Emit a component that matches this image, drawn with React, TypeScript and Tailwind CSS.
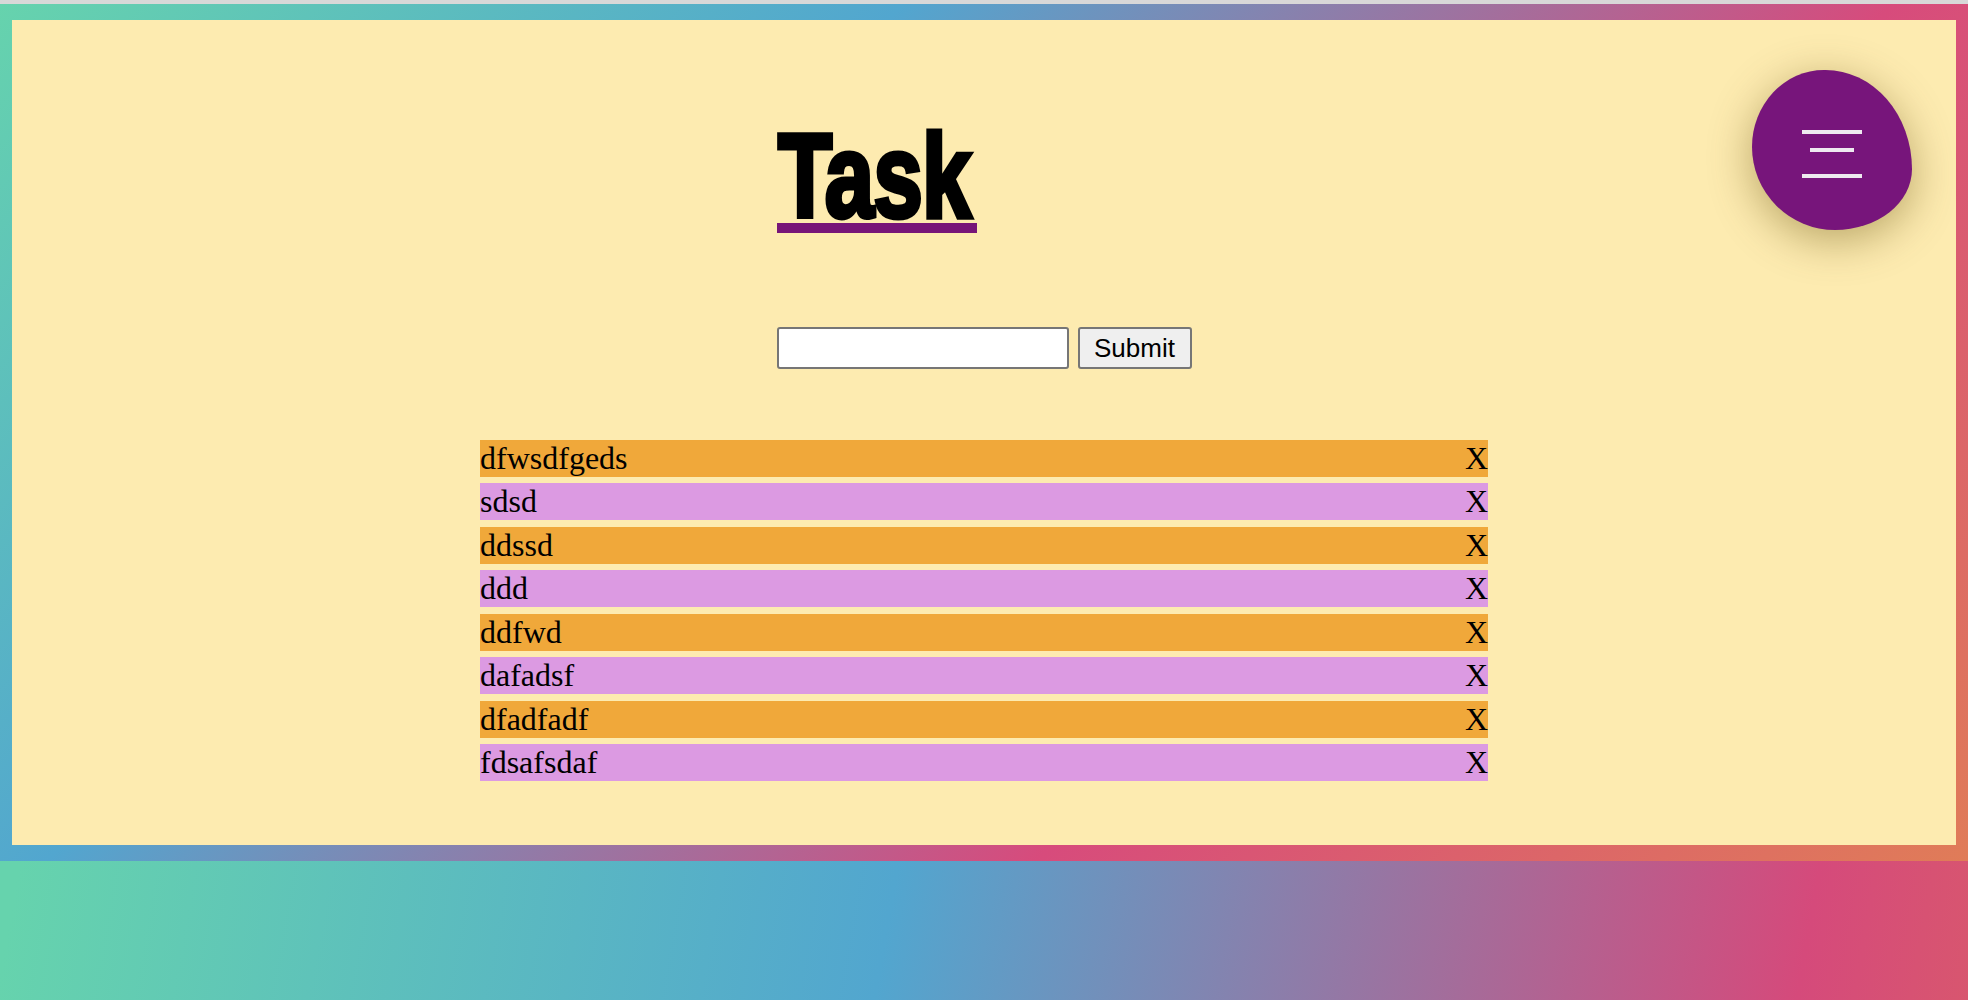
import React from "react";

const tasks = [
  "dfwsdfgeds",
  "sdsd",
  "ddssd",
  "ddd",
  "ddfwd",
  "dafadsf",
  "dfadfadf",
  "fdsafsdaf",
];

export default function App() {
  return (
    <div className="relative w-[1968px] h-[1000px] overflow-hidden bg-[linear-gradient(100deg,#66d3ad_8%,#52a6cf_49%,#d54a7b_92%,#d8566f_100%)]">
      <div className="h-[4px] bg-[#d8d8d8]" />
      <div className="pt-[16px] pb-[16px] px-[12px] bg-[linear-gradient(135deg,#66d3ad_0%,#52a6cf_32%,#d74b7c_67%,#e07c58_100%)]">
        <div className="relative h-[825px] bg-[#fdebb0]">
          <div className="w-[415px] mx-auto pt-[108.5px]">
            <h1 className="w-[200px] h-[104.5px] border-b-[10px] border-[#771578] leading-[94.5px] text-[119px] font-bold text-black whitespace-nowrap font-['Liberation_Sans',Arial,sans-serif]">
              <span className="inline-block origin-left translate-x-[1px] scale-x-[0.745] [-webkit-text-stroke:5px_black] tracking-[-1px]">
                Task
              </span>
            </h1>
            <form
              className="mt-[94px] flex gap-[9px]"
              onSubmit={(e) => e.preventDefault()}
            >
              <input
                type="text"
                className="w-[292px] h-[42px] bg-white border-2 border-[#767676] rounded-[3px] outline-none px-2 text-[24px] font-['Liberation_Sans',Arial,sans-serif]"
              />
              <button
                type="submit"
                className="w-[114px] h-[42px] bg-[#efefef] border-2 border-[#767676] rounded-[3px] text-[26px] text-black leading-none font-['Liberation_Sans',Arial,sans-serif]"
              >
                Submit
              </button>
            </form>
          </div>
          <ul className="w-[1008px] mx-auto mt-[71px] flex flex-col gap-[6.43px] font-['Liberation_Serif','Times_New_Roman',serif] text-[32px] text-black">
            {tasks.map((t, i) => (
              <li
                key={t}
                className={`flex justify-between items-center h-[37px] leading-[37px] ${
                  i % 2 === 0 ? "bg-[#f0a83a]" : "bg-[#dc9ae2]"
                }`}
              >
                <span>{t}</span>
                <span>X</span>
              </li>
            ))}
          </ul>
          <div className="absolute top-[50px] right-[44px] w-[160px] h-[160px] bg-[#77157b] rounded-[45%_54%_48%_52%/48%_62%_38%_52%] shadow-[0_10px_44px_rgba(90,70,0,0.42)]">
            <div className="absolute left-[50px] top-[60px] w-[60px] h-[4px] bg-[#eeeaf0]" />
            <div className="absolute left-[58px] top-[78px] w-[44px] h-[4px] bg-[#eeeaf0]" />
            <div className="absolute left-[50px] top-[104px] w-[60px] h-[4px] bg-[#eeeaf0]" />
          </div>
        </div>
      </div>
    </div>
  );
}
